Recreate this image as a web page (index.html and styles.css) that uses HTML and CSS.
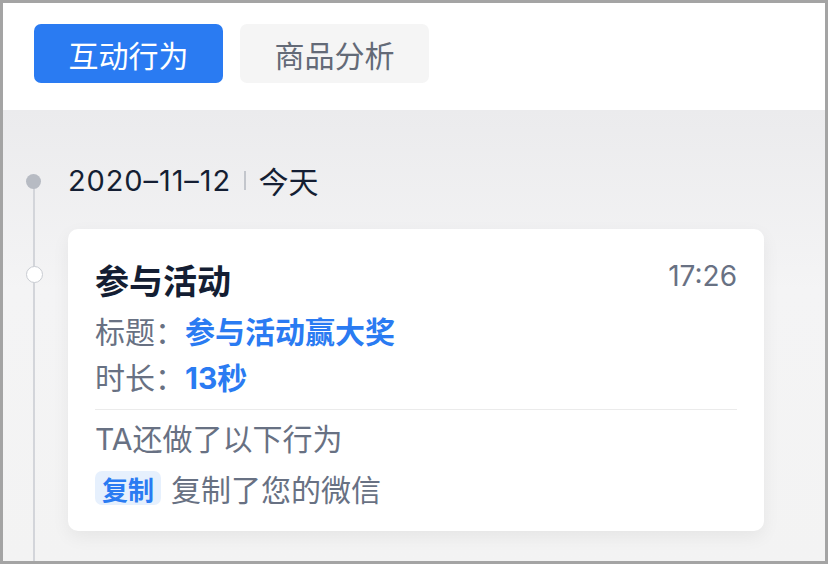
FILE: index.html
```html
<!DOCTYPE html>
<html lang="zh-CN">
<head>
    <meta charset="UTF-8" />
    <meta name="viewport" content="width=device-width, initial-scale=1.0" />
    <title>互动行为</title>
    <link rel="stylesheet" href="styles.css">
</head>
<body>
    <div class="frame">
        <!-- Tabs -->
        <div class="tabs">
            <div class="tab active">互动行为</div>
            <div class="tab">商品分析</div>
        </div>

        <!-- Timeline -->
        <div class="content">
            <div class="timeline">
                <div class="date-row">
                    <span class="date">2020–11–12</span>
                    <span class="sep"></span>
                    <span class="day">今天</span>
                </div>

                <div class="card">
                    <div class="card-head">
                        <div class="card-title">参与活动</div>
                        <div class="card-time">17:26</div>
                    </div>
                    <div class="info-row">
                        <span class="label">标题：</span>
                        <span class="value">参与活动赢大奖</span>
                    </div>
                    <div class="info-row">
                        <span class="label">时长：</span>
                        <span class="value">13秒</span>
                    </div>
                    <div class="divider"></div>
                    <div class="more">TA还做了以下行为</div>
                    <div class="action">
                        <span class="tag">复制</span>
                        <span>复制了您的微信</span>
                    </div>
                </div>
            </div>
        </div>
    </div>
</body>
</html>
```

FILE: styles.css
```css
:root {
    --blue: #2a7bf2;
    --text-dark: #141e33;
    --text-gray: #687183;
    --line-gray: #d3d5da;
}

* {
    margin: 0;
    padding: 0;
    box-sizing: border-box;
}

body {
    font-family: 'Inter', 'Noto Sans CJK SC', sans-serif;
    background: #fff;
}

.frame {
    width: 828px;
    height: 564px;
    border: 3px solid #a4a4a4;
    overflow: hidden;
    display: flex;
    flex-direction: column;
}

/* Tabs */
.tabs {
    height: 107px;
    flex-shrink: 0;
    background: #fff;
    display: flex;
    gap: 17px;
    padding: 21px 0 0 31px;
    position: relative;
    z-index: 1;
}

.tab {
    width: 189px;
    height: 59px;
    border-radius: 7px;
    background: #f5f5f5;
    color: #636a77;
    font-size: 30px;
    display: flex;
    align-items: center;
    justify-content: center;
}

.tab.active {
    background: var(--blue);
    color: #fff;
}

/* Content */
.content {
    flex: 1;
    background: linear-gradient(180deg, #ebebed 0%, #f4f4f5 40%, #f3f3f3 100%);
    padding: 52px 0 0 65px;
}

.timeline {
    position: relative;
    height: 100%;
}

.timeline::before {
    content: '';
    position: absolute;
    left: -35px;
    top: 18px;
    bottom: -10px;
    width: 2px;
    background: var(--line-gray);
}

.date-row {
    position: relative;
    display: flex;
    align-items: center;
    height: 36px;
    margin-bottom: 2px;
    color: var(--text-dark);
    font-size: 29px;
}

.date-row::before {
    content: '';
    position: absolute;
    left: -42px;
    top: 12px;
    width: 15px;
    height: 15px;
    border-radius: 50%;
    background: #b7bbc3;
}

.date {
    letter-spacing: 0.9px;
}

.sep {
    width: 1.5px;
    height: 19px;
    margin: 0 13px 0 13px;
    background: #c3c6cc;
}

.day {
    font-size: 30px;
}

/* Card */
.card {
    position: relative;
    margin-top: 31px;
    width: 696px;
    background: #fff;
    border-radius: 10px;
    padding: 30px 27px 20px 27px;
    box-shadow: 0 6px 18px rgba(0, 0, 0, 0.06);
}

.card::before {
    content: '';
    position: absolute;
    left: -42px;
    top: 37px;
    width: 15px;
    height: 15px;
    border-radius: 50%;
    border: 1.5px solid #c9ccd2;
    background: #fff;
}

.card-head {
    display: flex;
    justify-content: space-between;
    align-items: center;
    height: 40px;
    margin-bottom: 8px;
}

.card-title {
    font-size: 34px;
    font-weight: 700;
    color: var(--text-dark);
}

.card-time {
    font-size: 28px;
    color: var(--text-gray);
    margin-top: -7px;
}

.info-row {
    height: 46px;
    display: flex;
    align-items: center;
    font-size: 30px;
}

.label {
    color: var(--text-gray);
}

.value {
    color: var(--blue);
    font-weight: 700;
}

.divider {
    height: 1px;
    background: #ebebeb;
    margin: 10px 0 4px;
}

.more,
.action {
    height: 46px;
    display: flex;
    align-items: center;
    font-size: 30px;
    color: var(--text-gray);
}

.action {
    margin-top: 5px;
    gap: 10px;
}

.tag {
    height: 34px;
    padding: 0 7px;
    border-radius: 7px;
    background: #e6f0fd;
    color: var(--blue);
    font-size: 26px;
    font-weight: 700;
    display: flex;
    align-items: center;
}
```
